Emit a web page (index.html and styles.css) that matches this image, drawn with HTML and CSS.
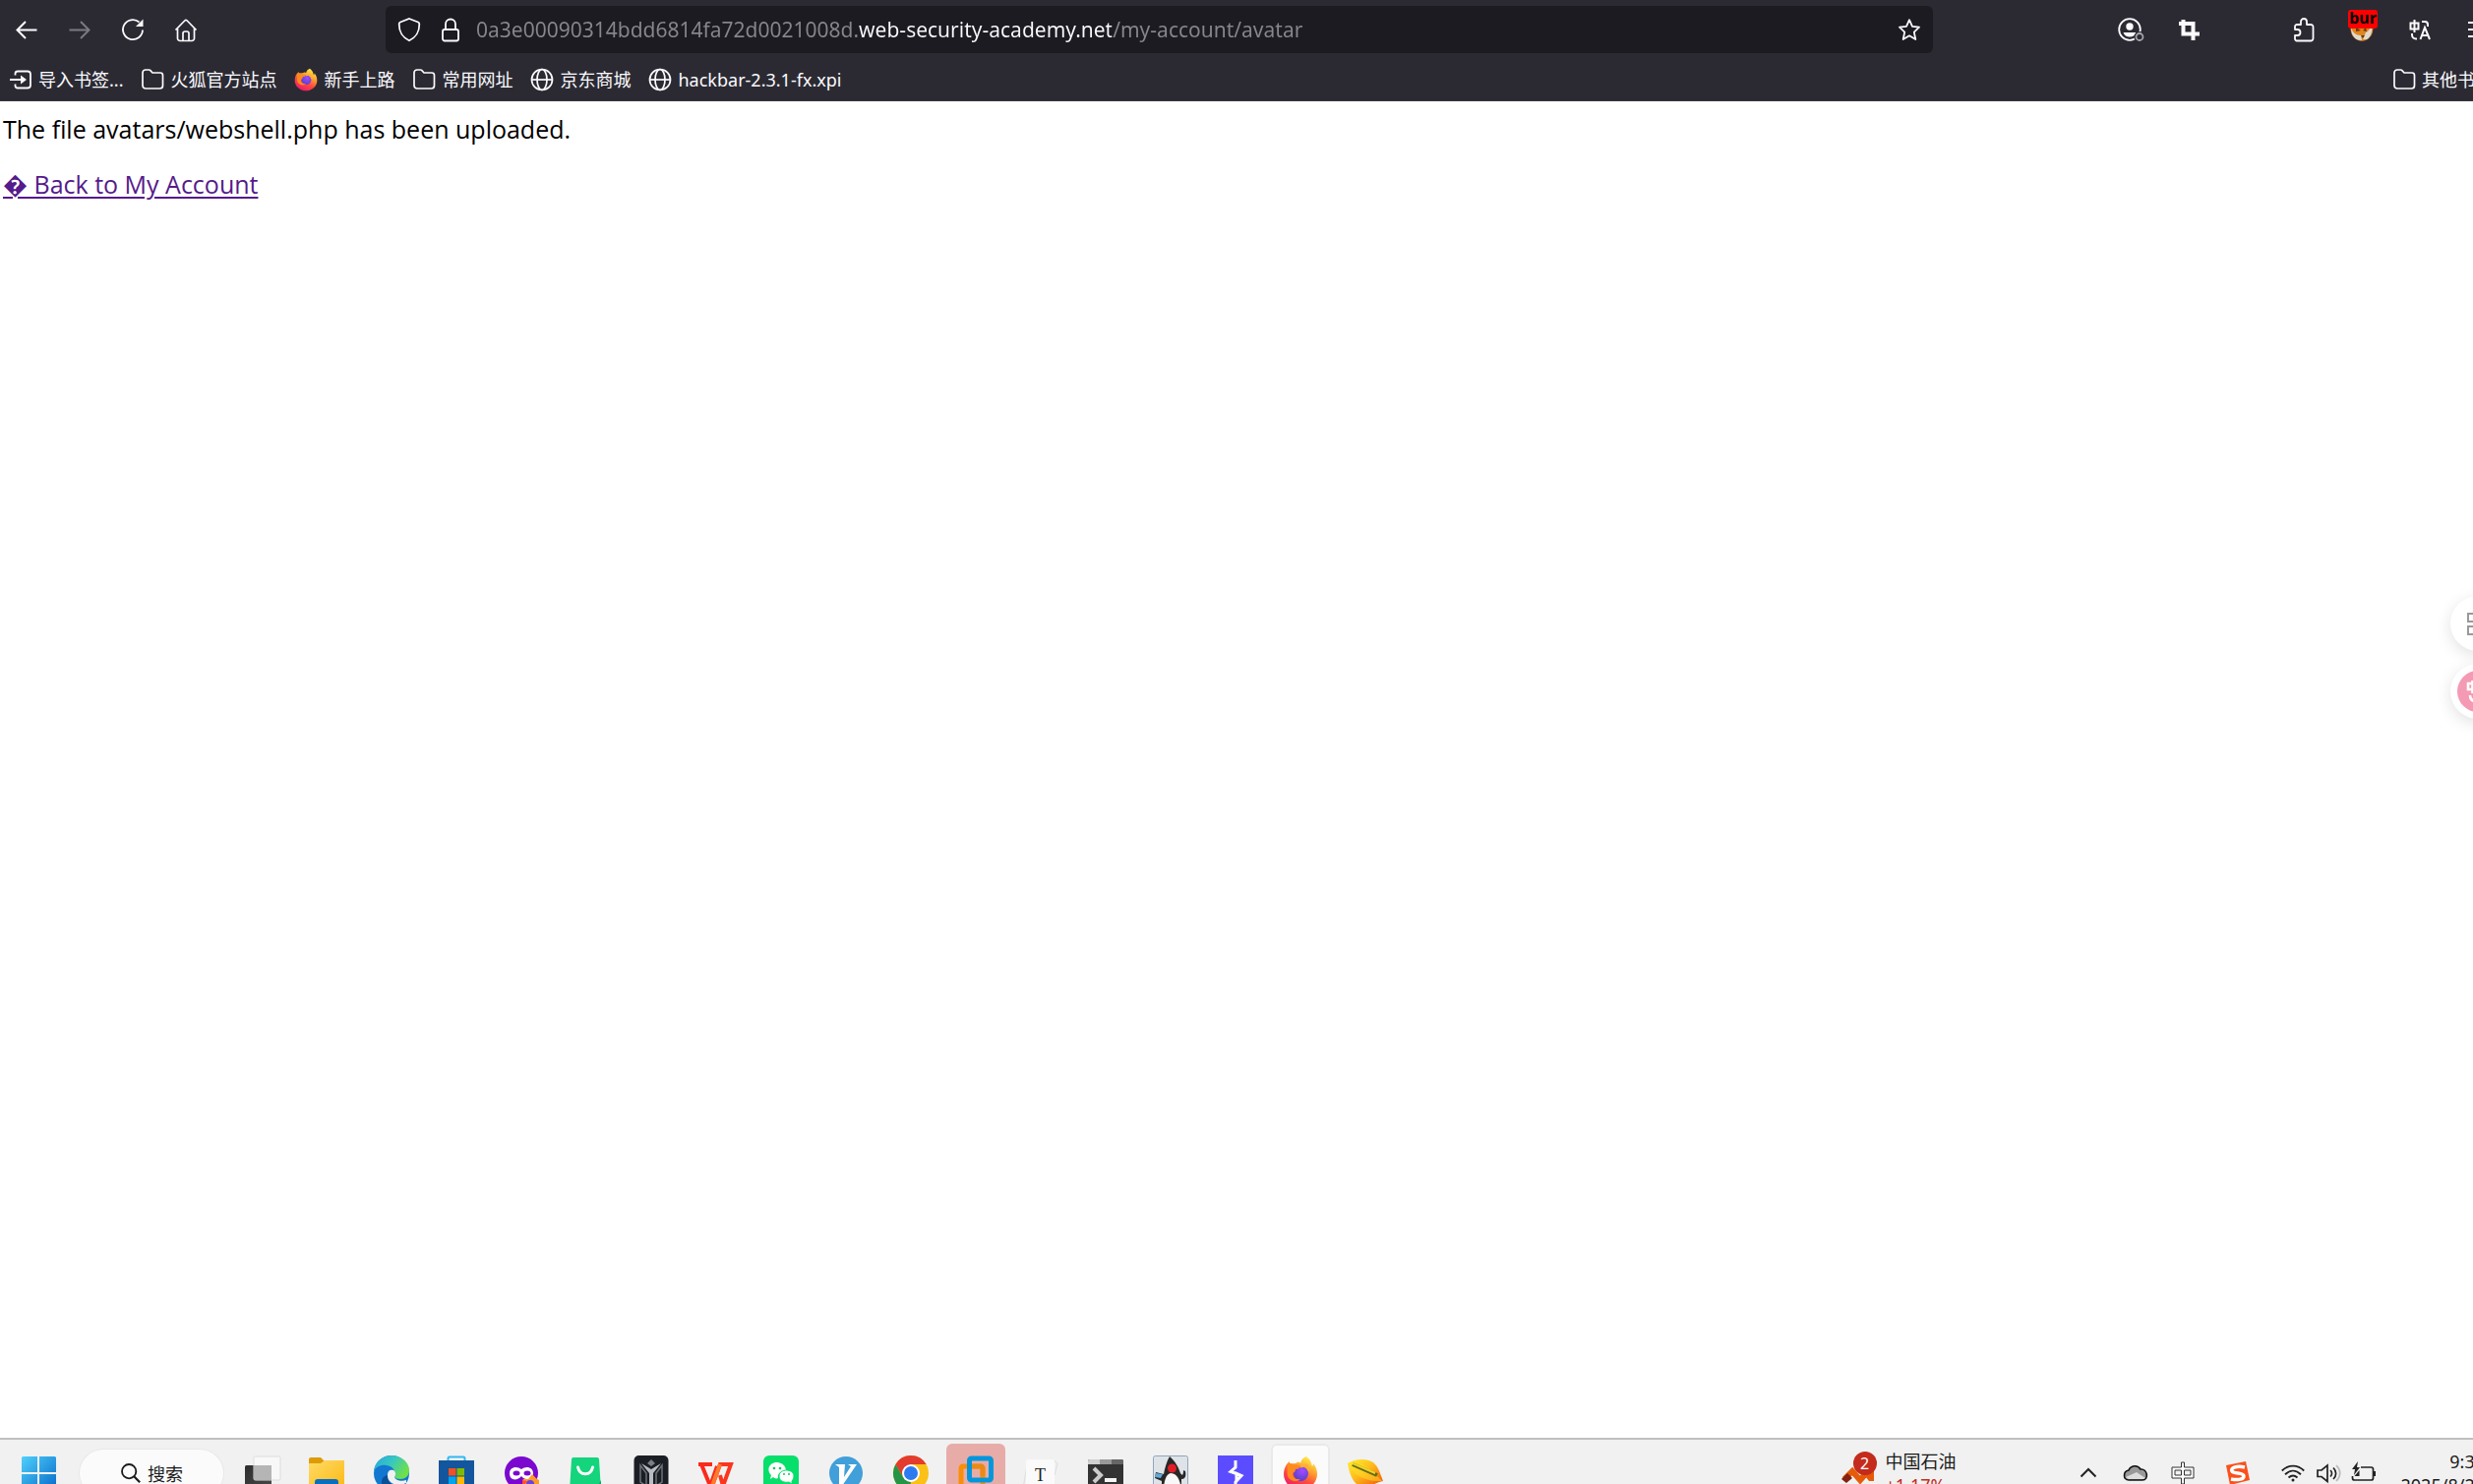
FILE: index.html
```html
<!DOCTYPE html>
<html lang="zh-CN">
<head>
  <meta charset="UTF-8">
  <title>0a3e00090314bdd6814fa72d0021008d.web-security-academy.net</title>
  <link rel="stylesheet" href="styles.css">
</head>
<body>
  <svg class="defs" aria-hidden="true">
    <defs>
      <linearGradient id="ffBody" x1="0.8" y1="0" x2="0.3" y2="1">
        <stop offset="0" stop-color="#fff44f"/><stop offset="0.35" stop-color="#ffa42e"/>
        <stop offset="0.65" stop-color="#ff4a3d"/><stop offset="1" stop-color="#e8196f"/>
      </linearGradient>
      <radialGradient id="ffGlobe" cx="0.6" cy="0.3" r="0.8">
        <stop offset="0" stop-color="#a44bff"/><stop offset="1" stop-color="#4b3fc4"/>
      </radialGradient>
      <linearGradient id="win" x1="0" y1="0" x2="1" y2="1">
        <stop offset="0" stop-color="#4fd0fb"/><stop offset="1" stop-color="#0669c9"/>
      </linearGradient>
      <linearGradient id="folderG" x1="0" y1="0" x2="1" y2="1">
        <stop offset="0" stop-color="#ffdb66"/><stop offset="1" stop-color="#fbb914"/>
      </linearGradient>
      <linearGradient id="edgeTop" x1="0" y1="0" x2="1" y2="0.5">
        <stop offset="0" stop-color="#28a5dd"/><stop offset="0.5" stop-color="#36c6c3"/><stop offset="1" stop-color="#6ee04a"/>
      </linearGradient>
      <linearGradient id="dark" x1="0" y1="0" x2="1" y2="1">
        <stop offset="0" stop-color="#2d2d2d"/><stop offset="1" stop-color="#4a4a4a"/>
      </linearGradient>
      <linearGradient id="leaf" x1="0" y1="0" x2="1" y2="1">
        <stop offset="0" stop-color="#fff02c"/><stop offset="0.45" stop-color="#ffbb1c"/><stop offset="1" stop-color="#ee5008"/>
      </linearGradient>
      <symbol id="folder" viewBox="0 0 24 24">
        <path d="M2 5a3 3 0 0 1 3-3h3.500a2 2 0 0 1 1.400.6L12 5h8a2.500 2.500 0 0 1 2.500 2.500V18a3 3 0 0 1-3 3H5a3 3 0 0 1-3-3z" fill="none" stroke="currentColor" stroke-width="1.700"/>
      </symbol>
      <symbol id="globe" viewBox="0 0 24 24">
        <g fill="none" stroke="currentColor" stroke-width="1.700">
          <circle cx="12" cy="12" r="10.500"/><ellipse cx="12" cy="12" rx="5" ry="10.500"/><path d="M1.500 12h21"/>
        </g>
      </symbol>
      <symbol id="firefox" viewBox="0 0 36 36">
        <path d="M24 1c5 4 5 7 6 10 1-1 1-2 1-3 3 4 4 7 4 11a17 16 0 0 1-34 0c0-5 2-10 6-13 0 1 0 2 1 3 2-1 4-1 5-1 2-1 4-2 5 0 1-4 3-6 6-7z" fill="url(#ffBody)"/>
        <circle cx="18.500" cy="18.500" r="7.500" fill="url(#ffGlobe)"/>
        <path d="M5 9c3-2 5-1 7 1 2-1 4 0 6 1-1 2-2 3-5 3 0 2-1 3-3 4 0 4 3 7 8 6-4 4-11 2-13-3-1-4 0-8 0-12z" fill="#ff8a1f"/>
        <path d="M18 12c4-3 8 0 9 4 0-3-2-6-4-7" fill="none" stroke="#ffb02e" stroke-width="2"/>
      </symbol>
    </defs>
  </svg>

  <header class="browser">
    <div class="toolbar">
      <nav class="nav-buttons">
        <button type="button" aria-label="后退"><svg viewBox="0 0 24 24"><path d="M22.500 12.500H3M11 4l-8.500 8.500L11 21" fill="none" stroke="currentColor" stroke-width="2"/></svg></button>
        <button type="button" aria-label="前进" disabled><svg viewBox="0 0 24 24"><path d="M1.500 12.500H21M13 4l8.500 8.500L13 21" fill="none" stroke="currentColor" stroke-width="2"/></svg></button>
        <button type="button" aria-label="刷新"><svg viewBox="0 0 24 24"><path d="M18.500 4.500A10 10 0 1 0 22 12.500" fill="none" stroke="currentColor" stroke-width="1.800"/><path d="M22.500 1.500V9h-7.500z" fill="currentColor"/></svg></button>
        <button type="button" aria-label="主页"><svg viewBox="0 0 24 24"><path d="M1.500 12.500L10.800 3a1.700 1.700 0 0 1 2.400 0l9.300 9.500M3.500 11v10a2.500 2.500 0 0 0 2.500 2.500h12a2.500 2.500 0 0 0 2.500-2.500V11M9 23.500V16a2 2 0 0 1 2-2h2a2 2 0 0 1 2 2v7.500" fill="none" stroke="currentColor" stroke-width="1.700"/></svg></button>
      </nav>
      <div class="urlbar">
        <button type="button" aria-label="跟踪保护"><svg viewBox="0 0 24 24"><path d="M12 1l9 3.500c1 .4 1.300 1 1.300 2C22.300 14 20 19 12 23.300 4 19 1.700 14 1.700 6.500c0-1 .3-1.600 1.300-2z" fill="none" stroke="currentColor" stroke-width="1.800"/></svg></button>
        <button type="button" aria-label="连接安全"><svg viewBox="0 0 24 24"><rect x="4" y="12" width="16" height="11.500" rx="2" fill="none" stroke="currentColor" stroke-width="1.800"/><path d="M7 12V6.500a5 5 0 0 1 10 0V12" fill="none" stroke="currentColor" stroke-width="1.800"/></svg></button>
        <input type="text" class="url" aria-label="地址" value="0a3e00090314bdd6814fa72d0021008d.web-security-academy.net/my-account/avatar">
        <button type="button" aria-label="添加书签"><svg viewBox="0 0 24 24"><path d="M12 2.200l3 6.700 7 .8-5.200 4.900 1.500 7.400-6.300-3.700-6.300 3.700 1.500-7.400L2 9.700l7-.8z" fill="none" stroke="currentColor" stroke-width="1.800" stroke-linejoin="round"/></svg></button>
      </div>
      <div class="tools">
        <button type="button" aria-label="账户"><svg viewBox="0 0 24 24"><circle cx="11" cy="12" r="10.800" fill="none" stroke="currentColor" stroke-width="1.800"/><circle cx="11" cy="9" r="3.700" fill="currentColor"/><path d="M4.500 15h13c-1 3-3.500 4.500-6.500 4.500S5.500 18 4.500 15z" fill="currentColor"/><circle cx="21" cy="19.500" r="5.500" fill="#2b2a33"/><circle cx="21" cy="19.500" r="3.500" fill="none" stroke="#a5a5aa" stroke-width="1.800"/></svg></button>
        <button type="button" class="shot" aria-label="截图"><svg viewBox="0 0 24 24"><path d="M2 6h14.500v11.500M6.500 2v14.500H23M16.500 17v6" fill="none" stroke="currentColor" stroke-width="4"/></svg></button>
        <button type="button" aria-label="扩展"><svg viewBox="0 0 24 24"><path d="M3 12V9a2 2 0 0 1 2-2h4V4a3 3 0 0 1 6 0v3h4a2.500 2.500 0 0 1 2.500 2.500V21a2.500 2.500 0 0 1-2.500 2.500H5A2 2 0 0 1 3 21.500V18h2.500a3 3 0 0 0 0-6z" fill="none" stroke="currentColor" stroke-width="1.800" stroke-linejoin="round"/></svg></button>
        <button type="button" class="proxy" aria-label="FoxyProxy">
          <svg viewBox="0 0 24 24"><path d="M1 2h22c1 8 1 14-3 18-4 5-12 5-16 0C0 16 0 10 1 2z" fill="#e0861c"/><path d="M1 9c1 6 5 9 10 9l1 5c-8 0-11-6-11-14zm21-1c1 6-1 12-5 14h-4l3-7c3-1 4-4 6-7z" fill="#dedad3"/><path d="M6 10l5 3-5 1zm10 0l-3 3 4 1zm-5 8h4l-2 3z" fill="#5e3b18"/></svg>
          <span class="proxy-badge">bur</span>
        </button>
        <button type="button" aria-label="翻译"><svg viewBox="0 0 24 24" fill="none" stroke="currentColor" stroke-width="2"><path d="M2.500 5.500h8v6h-8zM6.500 2v13M14 4h3a3 3 0 0 1 3 3v2M4 16v1.500a4 4 0 0 0 4 4h1M12.500 22l4.500-12 5 12M14 18h6.500"/></svg></button>
        <button type="button" aria-label="菜单"><svg viewBox="0 0 24 24"><path d="M2 5h20M2 12h20M2 19h20" stroke="currentColor" stroke-width="1.800"/></svg></button>
      </div>
    </div>
    <nav class="bookmarks">
      <a href="#"><svg viewBox="0 0 24 24"><path d="M6.500 7.500V6a2.500 2.500 0 0 1 2.500-2.500h10A3 3 0 0 1 22 6.500v11a3 3 0 0 1-3 3H9A2.500 2.500 0 0 1 6.500 18v-1.500M1 12h12" fill="none" stroke="currentColor" stroke-width="1.800"/><path d="M12 7.500l6 4.500-6 4.500z" fill="currentColor"/></svg>导入书签...</a>
      <a href="#"><svg><use href="#folder"/></svg>火狐官方站点</a>
      <a href="#"><svg><use href="#firefox"/></svg>新手上路</a>
      <a href="#"><svg><use href="#folder"/></svg>常用网址</a>
      <a href="#"><svg><use href="#globe"/></svg>京东商城</a>
      <a href="#"><svg><use href="#globe"/></svg>hackbar-2.3.1-fx.xpi</a>
      <a href="#" class="other"><svg><use href="#folder"/></svg>其他书签</a>
    </nav>
  </header>

  <main class="page">
    <p>The file avatars/webshell.php has been uploaded.</p>
    <p><a href="#">&#xFFFD; Back to My Account</a></p>
    <div class="floaters">
      <button type="button" class="float-btn" aria-label="工具"><svg viewBox="0 0 24 24" fill="none" stroke="#999" stroke-width="2"><path d="M2 2h8v8H2zM14 2h8v8h-8zM2 15h8v8H2zM14 15h8v8h-8z"/></svg></button>
      <button type="button" class="float-btn translate" aria-label="翻译"><span><svg viewBox="0 0 24 24" fill="none" stroke="#fff" stroke-width="2.600"><path d="M2 4h9v6H2zM6.500 1v13M4 16c0 4 2 6 6 6M14 22l4-11 4 11M15 19h6"/></svg></span></button>
    </div>
  </main>

  <footer class="taskbar">
    <div class="taskbar-row">
      <button type="button" class="app start" aria-label="开始"><svg viewBox="0 0 36 36"><path d="M1 2.500Q1 1 2.500 1H17v16H1zM19 1h15.500Q36 1 36 2.500V17H19zM1 19h16v17H2.500Q1 36 1 34.500zM19 19h17v15.500q0 1.500-1.500 1.500H19z" fill="url(#win)"/></svg></button>
      <button type="button" class="search"><svg viewBox="0 0 24 24"><circle cx="10" cy="10" r="7.800" fill="none" stroke="currentColor" stroke-width="2"/><path d="M15.500 15.500L22 22" stroke="currentColor" stroke-width="2.400"/></svg>搜索</button>
      <div class="apps">
        <button type="button" class="app" aria-label="任务视图"><svg viewBox="0 0 36 36"><rect x="1" y="10" width="27" height="24" rx="1.500" fill="url(#dark)"/><rect x="10" y="1" width="27" height="24" rx="1.500" fill="#f8f8f8" stroke="#dcdcdc"/><path d="M10 10h18v15H10z" fill="#b5b5b5"/></svg></button>
        <button type="button" class="app" aria-label="文件资源管理器"><svg viewBox="0 0 36 36"><path d="M0 4q0-2 2-2h10l4 4v6H0z" fill="#dd9c06"/><path d="M0 8h12l4-3h20v29H0z" fill="url(#folderG)"/><path d="M6 36V27q0-3 3-3h18q3 0 3 3v9z" fill="#0b6dbd"/></svg></button>
        <button type="button" class="app" aria-label="Edge"><svg viewBox="0 0 36 36"><circle cx="18" cy="18" r="18" fill="#1277d0"/><path d="M0 16C1 6 9 0 18 0c10 0 18 7 18 15 0 6-4 9-9 9-3 0-5-1-6-2 2-4 0-11-8-12C7 9 2 12 0 16z" fill="url(#edgeTop)"/><path d="M14 20c-1 9 9 14 19 8-5 8-16 11-23 5-4-5-2-12 4-13z" fill="#0c4f92"/><path d="M14 20c0-5 3-6 6-5 2 1 3 4 1 7 1 3 7 5 12 3v3c-9 4-19 1-19-8z" fill="#f1f1f1"/></svg></button>
        <button type="button" class="app" aria-label="Microsoft Store"><svg viewBox="0 0 36 36"><path d="M9.500 7V3q0-1.500 1.500-1.500h14q1.500 0 1.500 1.500v4" fill="none" stroke="#30b9f1" stroke-width="2"/><path d="M0 5h36v29H0z" fill="#13569d"/><path d="M10 13h7.500v7.500H10z" fill="#f25022"/><path d="M18.500 13H26v7.500h-7.500z" fill="#7fba00"/><path d="M10 21.500h7.500V29H10z" fill="#00a4ef"/><path d="M18.500 21.500H26V29h-7.500z" fill="#ffb900"/></svg></button>
        <button type="button" class="app" aria-label="隐私窗口"><svg viewBox="0 0 36 36"><circle cx="18" cy="18" r="17" fill="#7b08cf"/><path d="M6 18c0-6 7-8 12-4 5-4 12-2 12 4 0 8-8 8-12 3-4 5-12 5-12-3z" fill="#fff"/><ellipse cx="13" cy="18" rx="3.500" ry="2.500" fill="#7b08cf"/><ellipse cx="24" cy="18" rx="3.500" ry="2.500" fill="#7b08cf"/><path d="M19 25c2-2 4-1 6-1l4-5c3 3 4 5 7 6v11H19z" fill="#ff9b2a"/><circle cx="27" cy="29" r="4" fill="#6a43d8"/><path d="M19 25l5 1-3 4v6h-2z" fill="#ff4f35"/></svg></button>
        <button type="button" class="app" aria-label="应用商店"><svg viewBox="0 0 36 36"><path d="M5 2h24q2 0 2 2l2 32H1L3 4q0-2 2-2z" fill="#14d47c"/><path d="M33 25l-6 11h6z" fill="#0aa865"/><path d="M9.500 12c2 9 13 9 15 0" fill="none" stroke="#fff" stroke-width="3" stroke-linecap="round"/></svg></button>
        <button type="button" class="app" aria-label="模拟器"><svg viewBox="0 0 36 36"><rect x="0.500" width="35" height="36" rx="5" fill="#1b1f25"/><path d="M7 10v17l6 4V18zM29 10v17l-6 4V18z" fill="none" stroke="#6d7279" stroke-width="1.500"/><path d="M8 8l10 6 10-6-8 10v18h-4V18z" fill="#b9bcc0"/><path d="M18 4l4 4-4 3-4-3z" fill="#7b8087"/></svg></button>
        <button type="button" class="app" aria-label="WPS"><svg viewBox="0 0 36 36"><path d="M0 9h14M3 9l9 22 7-20" fill="none" stroke="#fb2a1c" stroke-width="4"/><path d="M14 31L22 9h11l-8 22-3-11" fill="none" stroke="#fb351f" stroke-width="4"/><path d="M22 9l-8 22" stroke="#ff7a2c" stroke-width="4"/></svg></button>
        <button type="button" class="app" aria-label="微信"><svg viewBox="0 0 36 36"><rect width="36" height="36" rx="6" fill="#07df6b"/><path d="M7 24l1-4C1 12 10 4 18 8c4 2 5 5 5 8-6-1-9 4-8 7-2 1-4 0-5-1z" fill="#fff"/><path d="M16 21c0-8 15-8 15 0 0 2-1 4-2 5v3l-3-2c-5 1-10-1-10-6z" fill="#fff" stroke="#07df6b"/><g fill="#07c75f"><circle cx="11" cy="13" r="1.300"/><circle cx="17" cy="13" r="1.300"/><circle cx="21" cy="19" r="1"/><circle cx="26" cy="19" r="1"/></g></svg></button>
        <button type="button" class="app" aria-label="V"><svg viewBox="0 0 36 36"><circle cx="18" cy="18" r="17" fill="#419fd9"/><path d="M7 9h10l-1 13 7-11-3-2h9L14 31h-3V12z" fill="#fff"/></svg></button>
        <button type="button" class="app" aria-label="Chrome"><svg viewBox="0 0 36 36"><circle cx="18" cy="18" r="18" fill="#fbc116"/><path d="M2.400 9A18 18 0 0 1 33.600 9H18l-8 13z" fill="#e33b2e"/><path d="M2.400 9l8 13.500L18 27l-2 9A18 18 0 0 1 2.400 9z" fill="#269446"/><circle cx="18" cy="18" r="9" fill="#fff"/><circle cx="18" cy="18" r="7" fill="#2d7bf0"/></svg></button>
        <button type="button" class="app alert" aria-label="VMware"><svg viewBox="0 0 36 36" fill="none" stroke-width="5"><rect x="3" y="11" width="22" height="22" rx="2" stroke="#f78f08"/><rect x="11.500" y="3" width="22" height="22" rx="2" stroke="#0496dc"/><path d="M14 11h9q2 0 2 3v7" stroke="#e88b16"/></svg></button>
        <button type="button" class="app" aria-label="Typora"><svg viewBox="0 0 36 36"><path d="M5 4L0 34M31 5l4 3-3 12" stroke="#ddd" fill="none"/><rect x="3" y="4" width="29" height="32" rx="2" fill="#fafafa"/><text x="17.500" y="26" text-anchor="middle" class="typora">T</text></svg></button>
        <button type="button" class="app" aria-label="终端"><svg viewBox="0 0 36 36"><rect y="4" width="36" height="32" rx="2" fill="#333"/><path d="M0 9V6q0-2 2-2h10v5z" fill="#d0d0d0"/><path d="M12 4h12v5H12z" fill="#999"/><path d="M24 4h10q2 0 2 2v3H24z" fill="#666"/><path d="M6 13l7 7-7 7" fill="none" stroke="#ccc" stroke-width="4"/><path d="M17 23h12v4H17z" fill="#f5f5f5"/></svg></button>
        <button type="button" class="app" aria-label="Java"><svg viewBox="0 0 36 36"><rect x="0.500" y="0.500" width="35" height="35" rx="2" fill="#dfe3e8" stroke="#8ea6bd"/><path d="M17 1c6 5 9 11 11 17 2 3 3 2 3-3l2 1c1 5 0 8-4 8v12H9V26l-7-3 1-6 8 2c1-6 3-13 6-18z" fill="#282828"/><path d="M11 36c0-9 2-17 7-18 6 0 10 6 11 18z" fill="#f8f8f8"/><path d="M3 18l7 1-2 4-6-1z" fill="#62a9d8"/><circle cx="19.500" cy="13" r="4.500" fill="#e11e25"/></svg></button>
        <button type="button" class="app" aria-label="Burp Suite"><svg viewBox="0 0 36 36"><path d="M0 0h36v36H0z" fill="#5b4dff"/><path d="M18 5v7l-5 4.500 6 2v7M17 17.500l7 3-6 6.500v9" fill="none" stroke="#fff" stroke-width="3"/></svg></button>
        <button type="button" class="app active" aria-label="Firefox"><svg><use href="#firefox"/></svg></button>
        <button type="button" class="app" aria-label="编辑器"><svg viewBox="0 0 36 36"><path d="M0 8C8 3 19 3 26 7c5 4 7 11 10 19-7 1-11 6-21 6C6 30 2 20 0 8z" fill="url(#leaf)"/><path d="M0 8c12-4 22 4 35 18C17 27 6 20 0 8z" fill="#ffe02a" opacity="0.500"/><path d="M5 9l25 11" stroke="#6a6a16" stroke-width="4"/><path d="M5 8l23 10" stroke="#ecd626" stroke-width="2"/></svg></button>
      </div>

      <button type="button" class="stock">
        <span class="stock-icon">
          <svg viewBox="0 0 36 36"><path d="M4 24l8-8 8 9 8-9" fill="none" stroke="#e65b08" stroke-width="6"/><path d="M1 24l6-6 5 5-6 5z" fill="#85210f"/><path d="M18 11h16v15h-5l-4-5z" fill="#e65b08"/></svg>
          <span class="count">2</span>
        </span>
        <span class="stock-text">中国石油<br><b>+1.17%</b></span>
      </button>

      <div class="tray">
        <button type="button" aria-label="显示隐藏的图标"><svg viewBox="0 0 24 24"><path d="M4.500 15.500L12 8l7.500 7.500" fill="none" stroke="#222" stroke-width="2"/></svg></button>
        <button type="button" class="cloud" aria-label="OneDrive"><svg viewBox="0 0 24 24"><path d="M5 19C-1 19-1 10 5 9c2-5 9-6 12-1 7-1 9 11 2 11z" fill="#999" stroke="#111" stroke-width="1.600"/><path d="M2 16l11-5 9 6-2 1H5z" fill="#ddd"/></svg></button>
        <button type="button" class="ime" aria-label="中文输入"><svg viewBox="0 0 24 24"><path d="M10.500 1h3v5H23v11h-9.500v6h-3v-6H1V6h9.500zM4 9v5h6.500V9zm9.500 0v5H20V9z" fill="#fff" stroke="#333" stroke-width="1"/></svg></button>
        <button type="button" class="sogou" aria-label="搜狗输入法"><svg viewBox="0 0 24 24"><path d="M0 4L20 0l4 19-20 5z" fill="#fa511d"/><path d="M19 6C10 4 4 7 6 10s12 1 12 5-8 4-13 3" fill="none" stroke="#fff" stroke-width="3.500"/></svg></button>
        <button type="button" aria-label="网络"><svg viewBox="0 0 24 24" fill="none" stroke="#222" stroke-width="1.900"><path d="M.8 9.500c6.500-6.500 16-6.500 22.400 0M4 13.200c5-4.800 11-4.800 16 0M7.500 16.500c3-2.700 6-2.700 9 0"/><circle cx="12" cy="19" r="1.500" fill="#222" stroke="none"/></svg></button>
        <button type="button" aria-label="音量"><svg viewBox="0 0 24 24" fill="none" stroke="#222" stroke-width="1.700"><path d="M1 9v6.500h4l6 5V4L5 9zM14 9c2 2 2 4.500 0 6.500M17 6.500c3.500 3.500 3.500 8 0 11.500"/><path d="M20 4c5 5 5 11 0 16" stroke="#bbb"/></svg></button>
        <button type="button" aria-label="电池"><svg viewBox="0 0 24 24"><path d="M9 6h10.500q2 0 2 2v9q0 2-2 2h-17q-2 0-2-2v-2" fill="none" stroke="#222" stroke-width="1.700"/><path d="M22 10h2v5h-2zM6 0L0 8h3l-1 6 6-8H5zM2.500 15h5V9l-5 6z" fill="#222"/></svg></button>
        <time class="clock" datetime="2025-08-25T09:33">9:33<br>2025/8/25</time>
      </div>
    </div>
  </footer>
</body>
</html>
```
FILE: styles.css
```css
* { box-sizing: border-box; }
body { margin: 0; height: 100vh; display: flex; flex-direction: column; overflow: hidden; background: #fff; font-family: "Noto Sans", "Noto Sans CJK SC", sans-serif; }
button { display: grid; place-items: center; flex: none; padding: 0; border: 0; background: none; color: inherit; font: inherit; }
svg { display: block; flex: none; overflow: visible; }
.defs { position: absolute; width: 0; height: 0; }

/* browser chrome */
.browser { background: #2b2a33; color: #fbfbfe; border-bottom: 1px solid #38383d; }
.toolbar { display: flex; align-items: center; height: 60px; }
.toolbar button svg { width: 24px; height: 24px; }
.nav-buttons { display: flex; flex: 0 0 392px; gap: 30px; padding-left: 15px; }
.nav-buttons button:disabled { color: #7b7a81; }
.urlbar { display: flex; align-items: center; flex: 1; height: 48px; gap: 18px; padding: 0 12px; border-radius: 6px; background: #1c1b22; }
.url {
  flex: 1; min-width: 0; height: 40px; padding: 0; margin-left: -4px; border: 0; outline: 0;
  font-family: "Noto Sans", sans-serif; font-size: 21px; color: #8f8f94;
  /* the registered domain is lit, the rest of the address is dimmed */
  background: linear-gradient(90deg, #87868c 389px, #fbfbfe 389px, #fbfbfe 646px, #87868c 646px);
  -webkit-background-clip: text; background-clip: text; -webkit-text-fill-color: transparent;
}
.tools { display: flex; flex: 0 0 566px; justify-content: flex-end; gap: 35px; margin-right: -17px; }
.shot { margin-right: 58px; }
.proxy { position: relative; }
.proxy-badge { position: absolute; top: -8px; left: -2px; width: 30px; height: 19px; border-radius: 3px; background: #f00; color: #000; font-size: 16px; font-weight: 700; line-height: 17px; }
.bookmarks { display: flex; align-items: center; gap: 18px; height: 42px; padding-left: 9px; }
.bookmarks a { display: flex; align-items: center; gap: 6px; color: inherit; font-size: 18px; line-height: 24px; text-decoration: none; white-space: nowrap; }
.bookmarks svg { width: 24px; height: 24px; }
.bookmarks .other { margin-left: auto; margin-right: -20px; }

/* page content */
.page { flex: 1; position: relative; min-height: 0; padding: 12px 3px; color: #000; font-family: "Open Sans", "Noto Sans", sans-serif; font-size: 25px; line-height: 32px; }
.page p { margin: 0 0 24px; }
.page a { color: #551a8b; text-underline-offset: 3px; text-decoration-thickness: 2px; }
.floaters { position: absolute; top: 503px; right: -33px; display: grid; gap: 13px; }
.float-btn { width: 56px; height: 56px; border-radius: 50%; background: #fff; box-shadow: 0 4px 16px rgba(0, 0, 0, 0.12); }
.float-btn svg { width: 26px; height: 24px; }
.translate span { display: grid; place-items: center; width: 42px; height: 42px; border-radius: 50%; background: #f49ab4; }

/* taskbar, its lower part runs below the window */
.taskbar { flex: none; height: 47px; overflow: hidden; border-top: 2px solid #bfbfbf; background: #f1f1f1; color: #1b1b1b; font-size: 18px; }
.taskbar-row { display: flex; align-items: center; height: 68px; }
.app { width: 60px; height: 60px; border-radius: 6px; }
.app svg { width: 36px; height: 36px; }
.start { margin-left: 9px; }
.search { display: flex; align-items: center; gap: 6px; width: 146px; height: 48px; margin: 0 9px 0 12px; padding-left: 41px; border-radius: 24px; background: #fbfbfb; box-shadow: 0 0 0 1px #e8e8e8; }
.search svg { width: 22px; height: 22px; }
.apps { display: flex; flex: 1; gap: 6px; }
.alert { background: #e8aca8; }
.active { background: #fbfbfb; box-shadow: inset 0 0 0 2px #e9e9e9; }
.typora { font: 18px "Liberation Serif", serif; fill: #222; }
.stock { display: flex; gap: 10px; margin-right: 122px; text-align: left; line-height: 24px; }
.stock-icon { position: relative; }
.stock-icon svg { width: 36px; height: 36px; }
.stock b { color: #c42b1c; font-weight: 400; }
.count { position: absolute; top: -4px; right: -1px; width: 24px; height: 24px; border-radius: 50%; background: #c42b1c; color: #fff; text-align: center; font-size: 16px; }
.tray { display: flex; align-items: center; gap: 12px; margin-right: -12px; }
.tray svg { width: 24px; height: 24px; }
.cloud, .ime { margin-left: 12px; }
.sogou { margin: 0 20px; }
.clock { margin-left: 14px; text-align: right; line-height: 24px; }
```
